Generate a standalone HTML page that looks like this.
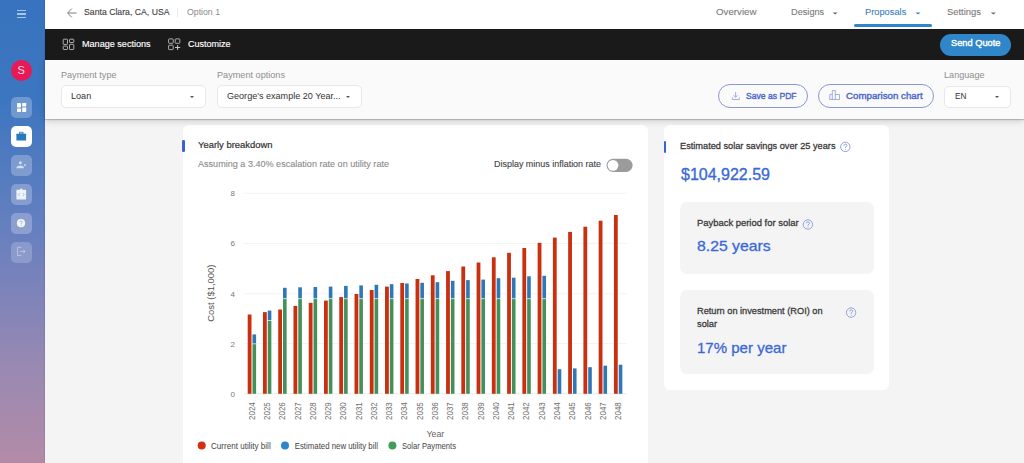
<!DOCTYPE html>
<html><head><meta charset="utf-8">
<style>
*{margin:0;padding:0;box-sizing:border-box}
html,body{width:1024px;height:463px;overflow:hidden;background:#f4f4f4;font-family:"Liberation Sans",sans-serif;color:#222}
.abs{position:absolute}
svg.abs{z-index:7}
#side{left:0;top:0;width:45px;height:463px;background:linear-gradient(180deg,#3873bf 0%,#3d76c0 22%,#6a80bf 52%,#9a89b2 80%,#b38ba7 100%);box-shadow:inset -1px 0 1px rgba(0,0,0,.08)}
#top{left:45px;top:0;width:979px;height:29px;background:#fff}
#bar{left:45px;top:29px;width:979px;height:31px;background:#1a1a1a}
#pay{left:45px;top:60px;width:979px;height:59px;background:#fafafa;box-shadow:0 1px 1px rgba(0,0,0,.18),0 2px 7px rgba(0,0,0,.16);z-index:5}
.t{position:absolute;z-index:8;white-space:nowrap;line-height:1;transform-origin:0 0}
.card{position:absolute;background:#fff;border-radius:6px}
.sel{position:absolute;z-index:6;background:#fff;border:1px solid #e8e8e8;border-radius:5px}
.btn{position:absolute;z-index:6;border:1px solid #8699d6;border-radius:13px}
.ib{position:absolute;left:11px;width:21px;height:21px;border-radius:5px;background:rgba(255,255,255,.25)}
.caret{position:absolute;z-index:7;width:0;height:0;border-left:2.2px solid transparent;border-right:2.2px solid transparent;border-top:2.4px solid #555}
</style></head><body>
<div id="side" class="abs">
  <div class="abs" style="left:17px;top:10px;width:9px;height:1.3px;background:#a9c6ec"></div>
  <div class="abs" style="left:17px;top:13.4px;width:9px;height:1.3px;background:#a9c6ec"></div>
  <div class="abs" style="left:17px;top:16.8px;width:9px;height:1.3px;background:#a9c6ec"></div>
  <div class="abs" style="left:10.6px;top:60.2px;width:21.2px;height:21.2px;border-radius:50%;background:#e81a55;color:#fde;font-size:11px;text-align:center;line-height:21px">S</div>
  <div class="ib" style="top:97.4px"></div>
  <div class="ib" style="top:126.3px;background:#fff"></div>
  <div class="ib" style="top:155px"></div>
  <div class="ib" style="top:184px"></div>
  <div class="ib" style="top:213px"></div>
  <div class="ib" style="top:241.8px;background:rgba(255,255,255,.2)"></div>
</div>
<svg class="abs" style="left:0;top:0" width="45" height="270" viewBox="0 0 45 270">
  <!-- dashboard -->
  <g fill="#fff">
    <rect x="17" y="103" width="4" height="4.6" rx="0.4"/>
    <rect x="22.2" y="103" width="4" height="3.4" rx="0.4"/>
    <rect x="17" y="108.6" width="4" height="3.4" rx="0.4"/>
    <rect x="22.2" y="107.4" width="4" height="4.6" rx="0.4"/>
  </g>
  <!-- briefcase -->
  <g fill="#2a79b8">
    <rect x="16.4" y="133.8" width="9.7" height="6.6" rx="0.5"/>
    <rect x="19.6" y="132.3" width="3.4" height="1.6" fill="none" stroke="#2a79b8" stroke-width="0.8"/>
  </g>
  <!-- person add -->
  <g fill="#dfe6f6" opacity="0.9">
    <circle cx="20.4" cy="162.8" r="1.5"/>
    <path d="M16.4 168.2 Q16.6 165.4 20.3 165.4 Q23.8 165.4 24 168.2 Z"/>
    <rect x="23.8" y="164.7" width="2.2" height="0.8"/>
    <rect x="24.5" y="164" width="0.8" height="2.2"/>
  </g>
  <!-- code window -->
  <g>
    <rect x="16.4" y="189.8" width="9.7" height="9.7" rx="0.6" fill="#eef2fa"/>
    <rect x="20.2" y="188.6" width="2" height="1.5" fill="#eef2fa"/>
    <path d="M19.6 193 L18.3 194.6 L19.6 196.2 M22.9 193 L24.2 194.6 L22.9 196.2" fill="none" stroke="#9aaad6" stroke-width="0.7"/>
  </g>
  <!-- help -->
  <g>
    <circle cx="21" cy="223.2" r="4.1" fill="#f2f4fb"/>
    <path d="M19.7 222.3 Q19.8 220.9 21.1 220.9 Q22.4 221 22.4 222.2 Q22.3 223 21.2 223.4 L21.2 224.3" fill="none" stroke="#9aa7d4" stroke-width="0.7"/>
    <circle cx="21.2" cy="225.5" r="0.45" fill="#9aa7d4"/>
  </g>
  <!-- logout -->
  <g fill="none" stroke="rgba(255,255,255,.5)" stroke-width="0.8">
    <path d="M21.5 247.3 H17.5 V255.6 H21.5"/>
    <path d="M19.8 251.4 H25 M23.3 249.8 L25 251.4 L23.3 253"/>
  </g>
</svg>
<div id="top" class="abs"></div>
<div id="bar" class="abs"></div>
<div id="pay" class="abs"></div>
<div class="abs" style="left:854px;top:24px;width:78px;height:3px;border-radius:2px;background:#2f86c8"></div>
<div class="abs" style="left:940px;top:34.3px;width:71px;height:21.5px;border-radius:11px;background:#2f86c9"></div>
<div class="sel" style="left:60.5px;top:85.3px;width:145px;height:23px"></div>
<div class="sel" style="left:216.5px;top:85.3px;width:145.5px;height:23px"></div>
<div class="sel" style="left:944.4px;top:85.5px;width:66.6px;height:22.7px"></div>
<div class="btn" style="left:718px;top:84.3px;width:90px;height:24.2px"></div>
<div class="btn" style="left:817.5px;top:84.3px;width:116px;height:24.2px"></div>
<div class="caret" style="left:189.5px;top:96px"></div>
<div class="caret" style="left:345.5px;top:96px"></div>
<div class="caret" style="left:994.6px;top:96px"></div>
<div class="card" style="left:183px;top:124.5px;width:465px;height:345px"></div>
<div class="card" style="left:663.8px;top:124.5px;width:225.2px;height:265.3px"></div>
<div class="abs" style="left:680px;top:202px;width:194px;height:71.6px;border-radius:7px;background:#f4f4f4;z-index:2"></div>
<div class="abs" style="left:680.3px;top:290.2px;width:194px;height:84px;border-radius:7px;background:#f4f4f4;z-index:2"></div>
<div class="abs" style="left:182px;top:140.2px;width:2.5px;height:12.2px;border-radius:1.2px;background:#3c62d2;z-index:3"></div>
<div class="abs" style="left:663.8px;top:140.7px;width:2.5px;height:12.1px;border-radius:1.2px;background:#3c62d2;z-index:3"></div>
<svg class="abs" style="left:45px;top:0" width="200" height="60" viewBox="45 0 200 60">
  <path d="M67.8 13 H76.6 M71.8 8.6 L67.6 13 L71.8 17.4" fill="none" stroke="#707070" stroke-width="0.9"/>
  <rect x="177.2" y="8.3" width="0.8" height="9.2" fill="#e6e6e6"/>
  <g fill="none" stroke="#b4b4b4" stroke-width="0.95">
    <rect x="63.2" y="39.2" width="4.3" height="5.2" rx="0.6"/>
    <rect x="69.5" y="39.2" width="4.3" height="3.3" rx="0.6"/>
    <rect x="63.2" y="46.1" width="4.3" height="3.4" rx="0.6"/>
    <rect x="69.5" y="44.3" width="4.3" height="5.2" rx="0.6"/>
    <rect x="168.6" y="38.9" width="4.6" height="4.4" rx="0.6"/>
    <rect x="175.2" y="38.9" width="4.6" height="4.4" rx="0.6"/>
    <rect x="168.6" y="45.2" width="4.6" height="4.4" rx="0.6"/>
  </g>
  <path d="M177.6 45 V50 M175 47.5 H180.2" stroke="#d0d0d0" stroke-width="0.95"/>
</svg>
<svg class="abs" style="left:700px;top:0" width="324" height="110" viewBox="700 0 324 110">
  <path d="M832.6 12.4 L837.6 12.4 L835.1 14.6 Z" fill="#666"/>
  <path d="M915.5 12.4 L920.5 12.4 L918 14.6 Z" fill="#3c7cc0"/>
  <path d="M990.8 12.4 L995.8 12.4 L993.3 14.6 Z" fill="#666"/>
  <g fill="none" stroke="#9aa6d8" stroke-width="0.9">
    <path d="M735.6 92 V97.2 M733.7 95.3 L735.6 97.3 L737.5 95.3"/>
    <path d="M732.3 97.4 V99.5 H739.3 V97.4"/>
    <path d="M829.8 99.5 V94.4 H832.3 M832.3 99.5 V90.5 H835.3 V99.5 M835.3 94.5 H839.5 V99.5 H829.4"/>
  </g>
</svg>
<svg class="abs" style="left:590px;top:130px" width="280" height="200" viewBox="590 130 280 200">
  <rect x="606.5" y="158.7" width="26.1" height="13.3" rx="6.65" fill="#9b9b9b"/>
  <circle cx="613" cy="165.35" r="5.4" fill="#fff"/>
  <g transform="translate(845.3,146.9)"><circle r="4.7" fill="none" stroke="#8797d6" stroke-width="0.9"/><path d="M-1.5 -1.2 Q-1.4 -2.7 0.1 -2.7 Q1.6 -2.6 1.6 -1.3 Q1.5 -0.3 0.1 0.3 L0.1 1.2" fill="none" stroke="#8797d6" stroke-width="0.85"/><circle cx="0.1" cy="2.5" r="0.5" fill="#8797d6"/></g>
  <g transform="translate(807.9,224.5)"><circle r="4.7" fill="none" stroke="#8797d6" stroke-width="0.9"/><path d="M-1.5 -1.2 Q-1.4 -2.7 0.1 -2.7 Q1.6 -2.6 1.6 -1.3 Q1.5 -0.3 0.1 0.3 L0.1 1.2" fill="none" stroke="#8797d6" stroke-width="0.85"/><circle cx="0.1" cy="2.5" r="0.5" fill="#8797d6"/></g>
  <g transform="translate(851.1,312.6)"><circle r="4.7" fill="none" stroke="#8797d6" stroke-width="0.9"/><path d="M-1.5 -1.2 Q-1.4 -2.7 0.1 -2.7 Q1.6 -2.6 1.6 -1.3 Q1.5 -0.3 0.1 0.3 L0.1 1.2" fill="none" stroke="#8797d6" stroke-width="0.85"/><circle cx="0.1" cy="2.5" r="0.5" fill="#8797d6"/></g>
</svg>
<svg class="abs" style="left:0;top:0" width="1024" height="463" viewBox="0 0 1024 463">
<rect x="244" y="393.30" width="383" height="1" fill="#ebebeb"/>
<text x="235" y="396.70" font-size="8" fill="#777" text-anchor="end" font-family="Liberation Sans">0</text>
<rect x="244" y="343.10" width="383" height="1" fill="#f3f3f3"/>
<text x="235" y="346.50" font-size="8" fill="#777" text-anchor="end" font-family="Liberation Sans">2</text>
<rect x="244" y="293.30" width="383" height="1" fill="#f3f3f3"/>
<text x="235" y="296.70" font-size="8" fill="#777" text-anchor="end" font-family="Liberation Sans">4</text>
<rect x="244" y="242.90" width="383" height="1" fill="#f3f3f3"/>
<text x="235" y="246.30" font-size="8" fill="#777" text-anchor="end" font-family="Liberation Sans">6</text>
<rect x="244" y="192.70" width="383" height="1" fill="#f3f3f3"/>
<text x="235" y="196.10" font-size="8" fill="#777" text-anchor="end" font-family="Liberation Sans">8</text>
<rect x="247.70" y="314.50" width="3.8" height="79.30" fill="#c9300f"/>
<rect x="252.50" y="344.20" width="3.6" height="49.60" fill="#43905a"/>
<rect x="252.50" y="334.40" width="3.6" height="9.10" fill="#2e78b6"/>
<text transform="translate(254.80,420) rotate(-90)" font-size="9" fill="#6e6e6e" font-family="Liberation Sans" textLength="17.8" lengthAdjust="spacingAndGlyphs">2024</text>
<rect x="262.96" y="312.10" width="3.8" height="81.70" fill="#c9300f"/>
<rect x="267.76" y="321.00" width="3.6" height="72.80" fill="#43905a"/>
<rect x="267.76" y="310.60" width="3.6" height="9.70" fill="#2e78b6"/>
<text transform="translate(270.06,420) rotate(-90)" font-size="9" fill="#6e6e6e" font-family="Liberation Sans" textLength="17.8" lengthAdjust="spacingAndGlyphs">2025</text>
<rect x="278.22" y="309.50" width="3.8" height="84.30" fill="#c9300f"/>
<rect x="283.02" y="299.10" width="3.6" height="94.70" fill="#43905a"/>
<rect x="283.02" y="287.80" width="3.6" height="10.60" fill="#2e78b6"/>
<text transform="translate(285.32,420) rotate(-90)" font-size="9" fill="#6e6e6e" font-family="Liberation Sans" textLength="17.8" lengthAdjust="spacingAndGlyphs">2026</text>
<rect x="293.48" y="305.90" width="3.8" height="87.90" fill="#c9300f"/>
<rect x="298.28" y="299.10" width="3.6" height="94.70" fill="#43905a"/>
<rect x="298.28" y="287.30" width="3.6" height="11.10" fill="#2e78b6"/>
<text transform="translate(300.58,420) rotate(-90)" font-size="9" fill="#6e6e6e" font-family="Liberation Sans" textLength="17.8" lengthAdjust="spacingAndGlyphs">2027</text>
<rect x="308.74" y="302.80" width="3.8" height="91.00" fill="#c9300f"/>
<rect x="313.54" y="299.10" width="3.6" height="94.70" fill="#43905a"/>
<rect x="313.54" y="287.00" width="3.6" height="11.40" fill="#2e78b6"/>
<text transform="translate(315.84,420) rotate(-90)" font-size="9" fill="#6e6e6e" font-family="Liberation Sans" textLength="17.8" lengthAdjust="spacingAndGlyphs">2028</text>
<rect x="324.00" y="300.60" width="3.8" height="93.20" fill="#c9300f"/>
<rect x="328.80" y="299.10" width="3.6" height="94.70" fill="#43905a"/>
<rect x="328.80" y="286.60" width="3.6" height="11.80" fill="#2e78b6"/>
<text transform="translate(331.10,420) rotate(-90)" font-size="9" fill="#6e6e6e" font-family="Liberation Sans" textLength="17.8" lengthAdjust="spacingAndGlyphs">2029</text>
<rect x="339.26" y="297.10" width="3.8" height="96.70" fill="#c9300f"/>
<rect x="344.06" y="299.10" width="3.6" height="94.70" fill="#43905a"/>
<rect x="344.06" y="285.90" width="3.6" height="12.50" fill="#2e78b6"/>
<text transform="translate(346.36,420) rotate(-90)" font-size="9" fill="#6e6e6e" font-family="Liberation Sans" textLength="17.8" lengthAdjust="spacingAndGlyphs">2030</text>
<rect x="354.52" y="294.00" width="3.8" height="99.80" fill="#c9300f"/>
<rect x="359.32" y="299.10" width="3.6" height="94.70" fill="#43905a"/>
<rect x="359.32" y="285.40" width="3.6" height="13.00" fill="#2e78b6"/>
<text transform="translate(361.62,420) rotate(-90)" font-size="9" fill="#6e6e6e" font-family="Liberation Sans" textLength="17.8" lengthAdjust="spacingAndGlyphs">2031</text>
<rect x="369.78" y="290.00" width="3.8" height="103.80" fill="#c9300f"/>
<rect x="374.58" y="299.10" width="3.6" height="94.70" fill="#43905a"/>
<rect x="374.58" y="284.80" width="3.6" height="13.60" fill="#2e78b6"/>
<text transform="translate(376.88,420) rotate(-90)" font-size="9" fill="#6e6e6e" font-family="Liberation Sans" textLength="17.8" lengthAdjust="spacingAndGlyphs">2032</text>
<rect x="385.04" y="286.60" width="3.8" height="107.20" fill="#c9300f"/>
<rect x="389.84" y="299.10" width="3.6" height="94.70" fill="#43905a"/>
<rect x="389.84" y="284.20" width="3.6" height="14.20" fill="#2e78b6"/>
<text transform="translate(392.14,420) rotate(-90)" font-size="9" fill="#6e6e6e" font-family="Liberation Sans" textLength="17.8" lengthAdjust="spacingAndGlyphs">2033</text>
<rect x="400.30" y="283.00" width="3.8" height="110.80" fill="#c9300f"/>
<rect x="405.10" y="299.10" width="3.6" height="94.70" fill="#43905a"/>
<rect x="405.10" y="283.50" width="3.6" height="14.90" fill="#2e78b6"/>
<text transform="translate(407.40,420) rotate(-90)" font-size="9" fill="#6e6e6e" font-family="Liberation Sans" textLength="17.8" lengthAdjust="spacingAndGlyphs">2034</text>
<rect x="415.56" y="279.00" width="3.8" height="114.80" fill="#c9300f"/>
<rect x="420.36" y="299.10" width="3.6" height="94.70" fill="#43905a"/>
<rect x="420.36" y="282.80" width="3.6" height="15.60" fill="#2e78b6"/>
<text transform="translate(422.66,420) rotate(-90)" font-size="9" fill="#6e6e6e" font-family="Liberation Sans" textLength="17.8" lengthAdjust="spacingAndGlyphs">2035</text>
<rect x="430.82" y="275.30" width="3.8" height="118.50" fill="#c9300f"/>
<rect x="435.62" y="299.10" width="3.6" height="94.70" fill="#43905a"/>
<rect x="435.62" y="282.20" width="3.6" height="16.20" fill="#2e78b6"/>
<text transform="translate(437.92,420) rotate(-90)" font-size="9" fill="#6e6e6e" font-family="Liberation Sans" textLength="17.8" lengthAdjust="spacingAndGlyphs">2036</text>
<rect x="446.08" y="271.10" width="3.8" height="122.70" fill="#c9300f"/>
<rect x="450.88" y="299.10" width="3.6" height="94.70" fill="#43905a"/>
<rect x="450.88" y="280.80" width="3.6" height="17.60" fill="#2e78b6"/>
<text transform="translate(453.18,420) rotate(-90)" font-size="9" fill="#6e6e6e" font-family="Liberation Sans" textLength="17.8" lengthAdjust="spacingAndGlyphs">2037</text>
<rect x="461.34" y="266.50" width="3.8" height="127.30" fill="#c9300f"/>
<rect x="466.14" y="299.10" width="3.6" height="94.70" fill="#43905a"/>
<rect x="466.14" y="280.10" width="3.6" height="18.30" fill="#2e78b6"/>
<text transform="translate(468.44,420) rotate(-90)" font-size="9" fill="#6e6e6e" font-family="Liberation Sans" textLength="17.8" lengthAdjust="spacingAndGlyphs">2038</text>
<rect x="476.60" y="262.50" width="3.8" height="131.30" fill="#c9300f"/>
<rect x="481.40" y="299.10" width="3.6" height="94.70" fill="#43905a"/>
<rect x="481.40" y="279.60" width="3.6" height="18.80" fill="#2e78b6"/>
<text transform="translate(483.70,420) rotate(-90)" font-size="9" fill="#6e6e6e" font-family="Liberation Sans" textLength="17.8" lengthAdjust="spacingAndGlyphs">2039</text>
<rect x="491.86" y="257.30" width="3.8" height="136.50" fill="#c9300f"/>
<rect x="496.66" y="299.10" width="3.6" height="94.70" fill="#43905a"/>
<rect x="496.66" y="278.20" width="3.6" height="20.20" fill="#2e78b6"/>
<text transform="translate(498.96,420) rotate(-90)" font-size="9" fill="#6e6e6e" font-family="Liberation Sans" textLength="17.8" lengthAdjust="spacingAndGlyphs">2040</text>
<rect x="507.12" y="252.80" width="3.8" height="141.00" fill="#c9300f"/>
<rect x="511.92" y="299.10" width="3.6" height="94.70" fill="#43905a"/>
<rect x="511.92" y="277.70" width="3.6" height="20.70" fill="#2e78b6"/>
<text transform="translate(514.22,420) rotate(-90)" font-size="9" fill="#6e6e6e" font-family="Liberation Sans" textLength="17.8" lengthAdjust="spacingAndGlyphs">2041</text>
<rect x="522.38" y="248.00" width="3.8" height="145.80" fill="#c9300f"/>
<rect x="527.18" y="299.10" width="3.6" height="94.70" fill="#43905a"/>
<rect x="527.18" y="276.30" width="3.6" height="22.10" fill="#2e78b6"/>
<text transform="translate(529.48,420) rotate(-90)" font-size="9" fill="#6e6e6e" font-family="Liberation Sans" textLength="17.8" lengthAdjust="spacingAndGlyphs">2042</text>
<rect x="537.64" y="242.80" width="3.8" height="151.00" fill="#c9300f"/>
<rect x="542.44" y="299.10" width="3.6" height="94.70" fill="#43905a"/>
<rect x="542.44" y="275.80" width="3.6" height="22.60" fill="#2e78b6"/>
<text transform="translate(544.74,420) rotate(-90)" font-size="9" fill="#6e6e6e" font-family="Liberation Sans" textLength="17.8" lengthAdjust="spacingAndGlyphs">2043</text>
<rect x="552.90" y="237.60" width="3.8" height="156.20" fill="#c9300f"/>
<rect x="557.70" y="369.20" width="3.6" height="24.60" fill="#2e78b6"/>
<text transform="translate(560.00,420) rotate(-90)" font-size="9" fill="#6e6e6e" font-family="Liberation Sans" textLength="17.8" lengthAdjust="spacingAndGlyphs">2044</text>
<rect x="568.16" y="231.90" width="3.8" height="161.90" fill="#c9300f"/>
<rect x="572.96" y="368.40" width="3.6" height="25.40" fill="#2e78b6"/>
<text transform="translate(575.26,420) rotate(-90)" font-size="9" fill="#6e6e6e" font-family="Liberation Sans" textLength="17.8" lengthAdjust="spacingAndGlyphs">2045</text>
<rect x="583.42" y="226.70" width="3.8" height="167.10" fill="#c9300f"/>
<rect x="588.22" y="367.20" width="3.6" height="26.60" fill="#2e78b6"/>
<text transform="translate(590.52,420) rotate(-90)" font-size="9" fill="#6e6e6e" font-family="Liberation Sans" textLength="17.8" lengthAdjust="spacingAndGlyphs">2046</text>
<rect x="598.68" y="220.70" width="3.8" height="173.10" fill="#c9300f"/>
<rect x="603.48" y="365.70" width="3.6" height="28.10" fill="#2e78b6"/>
<text transform="translate(605.78,420) rotate(-90)" font-size="9" fill="#6e6e6e" font-family="Liberation Sans" textLength="17.8" lengthAdjust="spacingAndGlyphs">2047</text>
<rect x="613.94" y="215.00" width="3.8" height="178.80" fill="#c9300f"/>
<rect x="618.74" y="364.70" width="3.6" height="29.10" fill="#2e78b6"/>
<text transform="translate(621.04,420) rotate(-90)" font-size="9" fill="#6e6e6e" font-family="Liberation Sans" textLength="17.8" lengthAdjust="spacingAndGlyphs">2048</text>
<text transform="translate(214.2,293.2) rotate(-90)" font-size="9" fill="#555" text-anchor="middle" font-family="Liberation Sans" textLength="57.2" lengthAdjust="spacingAndGlyphs">Cost ($1,000)</text>
<text x="426.5" y="437" font-size="9" fill="#666" font-family="Liberation Sans" textLength="17.8" lengthAdjust="spacingAndGlyphs">Year</text>
<circle cx="201.7" cy="445.4" r="4" fill="#d42d12"/>
<text x="211" y="448.6" font-size="8.8" fill="#444" font-family="Liberation Sans" textLength="59.7" lengthAdjust="spacingAndGlyphs">Current utility bill</text>
<circle cx="285" cy="445.4" r="4" fill="#2e86c8"/>
<text x="294.7" y="448.6" font-size="8.8" fill="#444" font-family="Liberation Sans" textLength="83.2" lengthAdjust="spacingAndGlyphs">Estimated new utility bill</text>
<circle cx="392.4" cy="445.4" r="4" fill="#3f9f5a"/>
<text x="402" y="448.6" font-size="8.8" fill="#444" font-family="Liberation Sans" textLength="54" lengthAdjust="spacingAndGlyphs">Solar Payments</text>
</svg>
<div class="t" style="left:84.10px;top:7.10px;font-size:9.8px;font-weight:normal;color:#3c3c3c;transform:scaleX(0.8872);-webkit-text-stroke:0.12px #3c3c3c">Santa Clara, CA, USA</div>
<div class="t" style="left:186.60px;top:7.10px;font-size:9.8px;font-weight:normal;color:#8a8a8a;transform:scaleX(0.8911);">Option 1</div>
<div class="t" style="left:715.80px;top:7.47px;font-size:9.6px;font-weight:normal;color:#7a7a7a;transform:scaleX(1.0130);-webkit-text-stroke:0.1px #7a7a7a">Overview</div>
<div class="t" style="left:790.80px;top:7.47px;font-size:9.6px;font-weight:normal;color:#7a7a7a;transform:scaleX(0.9579);-webkit-text-stroke:0.1px #7a7a7a">Designs</div>
<div class="t" style="left:865.30px;top:7.47px;font-size:9.6px;font-weight:normal;color:#3f80c0;transform:scaleX(0.9681);-webkit-text-stroke:0.1px #3f80c0">Proposals</div>
<div class="t" style="left:947.40px;top:7.47px;font-size:9.6px;font-weight:normal;color:#7a7a7a;transform:scaleX(0.9808);-webkit-text-stroke:0.1px #7a7a7a">Settings</div>
<div class="t" style="left:81.90px;top:38.97px;font-size:9.6px;font-weight:normal;color:#ffffff;transform:scaleX(0.9458);-webkit-text-stroke:0.15px #fff">Manage sections</div>
<div class="t" style="left:187.70px;top:38.97px;font-size:9.6px;font-weight:normal;color:#ffffff;transform:scaleX(0.9400);-webkit-text-stroke:0.15px #fff">Customize</div>
<div class="t" style="left:950.60px;top:38.10px;font-size:9.8px;font-weight:normal;color:#ffffff;transform:scaleX(0.9447);-webkit-text-stroke:0.4px #fff">Send Quote</div>
<div class="t" style="left:60.90px;top:70.24px;font-size:9.4px;font-weight:normal;color:#8f8f8f;transform:scaleX(0.9682);">Payment type</div>
<div class="t" style="left:216.70px;top:70.24px;font-size:9.4px;font-weight:normal;color:#8f8f8f;transform:scaleX(0.9738);">Payment options</div>
<div class="t" style="left:71.10px;top:92.23px;font-size:9.3px;font-weight:normal;color:#333333;transform:scaleX(0.9767);">Loan</div>
<div class="t" style="left:227.00px;top:92.23px;font-size:9.3px;font-weight:normal;color:#333333;transform:scaleX(0.9744);">George's example 20 Year...</div>
<div class="t" style="left:745.60px;top:90.97px;font-size:9.6px;font-weight:normal;color:#4d67c8;transform:scaleX(0.8953);-webkit-text-stroke:0.4px #4d67c8">Save as PDF</div>
<div class="t" style="left:845.90px;top:90.97px;font-size:9.6px;font-weight:normal;color:#4d67c8;transform:scaleX(1.0117);-webkit-text-stroke:0.4px #4d67c8">Comparison chart</div>
<div class="t" style="left:944.30px;top:70.24px;font-size:9.4px;font-weight:normal;color:#8f8f8f;transform:scaleX(0.9710);">Language</div>
<div class="t" style="left:954.50px;top:91.24px;font-size:9.4px;font-weight:normal;color:#333333;transform:scaleX(0.8830);">EN</div>
<div class="t" style="left:198.30px;top:140.68px;font-size:9.0px;font-weight:normal;color:#333333;transform:scaleX(1.0462);-webkit-text-stroke:0.2px #333">Yearly breakdown</div>
<div class="t" style="left:198.30px;top:159.51px;font-size:9.2px;font-weight:normal;color:#8a8a8a;transform:scaleX(0.9868);-webkit-text-stroke:0.1px #8a8a8a">Assuming a 3.40% escalation rate on utility rate</div>
<div class="t" style="left:494.10px;top:159.63px;font-size:9.3px;font-weight:normal;color:#444444;transform:scaleX(0.9631);-webkit-text-stroke:0.12px #444">Display minus inflation rate</div>
<div class="t" style="left:680.20px;top:140.77px;font-size:9.6px;font-weight:normal;color:#383838;transform:scaleX(0.9593);-webkit-text-stroke:0.28px #383838">Estimated solar savings over 25 years</div>
<div class="t" style="left:680.80px;top:166.96px;font-size:16px;font-weight:normal;color:#3a69d6;transform:scaleX(1.0003);-webkit-text-stroke:0.35px #3a69d6">$104,922.59</div>
<div class="t" style="left:696.60px;top:218.37px;font-size:9.6px;font-weight:normal;color:#383838;transform:scaleX(0.9821);-webkit-text-stroke:0.28px #383838">Payback period for solar</div>
<div class="t" style="left:696.60px;top:239.23px;font-size:14.5px;font-weight:normal;color:#3a69d6;transform:scaleX(1.0870);-webkit-text-stroke:0.3px #3a69d6">8.25 years</div>
<div class="t" style="left:696.60px;top:306.37px;font-size:9.6px;font-weight:normal;color:#383838;transform:scaleX(0.9615);-webkit-text-stroke:0.28px #383838">Return on investment (ROI) on</div>
<div class="t" style="left:696.60px;top:318.67px;font-size:9.6px;font-weight:normal;color:#383838;transform:scaleX(0.9666);-webkit-text-stroke:0.28px #383838">solar</div>
<div class="t" style="left:696.60px;top:339.90px;font-size:15px;font-weight:normal;color:#3a69d6;transform:scaleX(1.0021);-webkit-text-stroke:0.3px #3a69d6">17% per year</div>
</body></html>
